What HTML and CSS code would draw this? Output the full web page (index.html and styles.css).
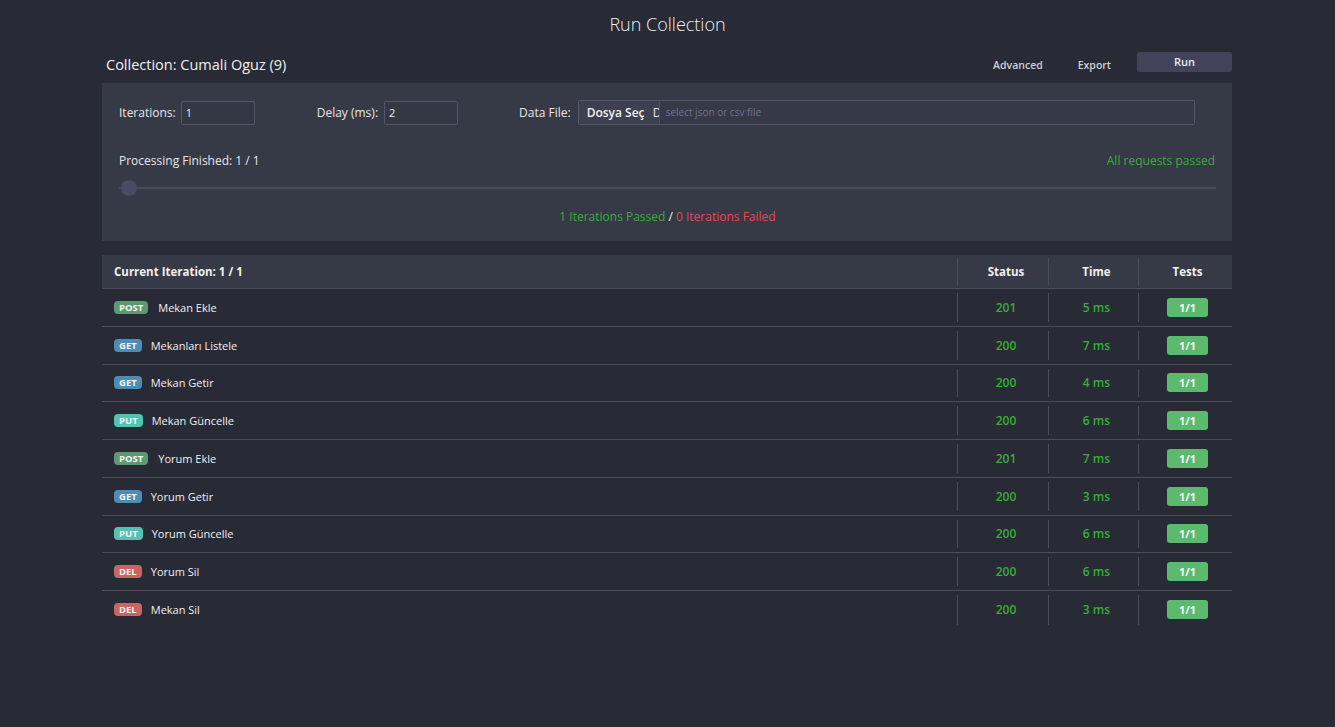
FILE: index.html
```html
<!DOCTYPE html>
<html lang="tr">
<head>
<meta charset="utf-8">
<title>Run Collection</title>
<link rel="stylesheet" href="styles.css">
</head>
<body>
<h1 class="title">Run Collection</h1>
<div class="wrap">
  <div class="topbar">
    <div class="coll-name">Collection: Cumali Oguz (9)</div>
    <div class="actions">
      <span class="link">Advanced</span>
      <span class="link">Export</span>
      <span class="run-btn">Run</span>
    </div>
  </div>

  <div class="panel">
    <div class="fields">
      <label class="field"><span class="lbl">Iterations:</span><span class="input">1</span></label>
      <label class="field"><span class="lbl">Delay (ms):</span><span class="input">2</span></label>
      <label class="field grow"><span class="lbl">Data File:</span>
        <span class="file">
          <span class="file-btn">Dosya Seç</span><span class="file-clip">D</span><span class="file-ph">select json or csv file</span>
        </span>
      </label>
    </div>
    <div class="progress-row">
      <span class="proc">Processing Finished: 1 / 1</span>
      <span class="passed">All requests passed</span>
    </div>
    <div class="slider"><span class="thumb"></span></div>
    <div class="summary"><span class="ok">1 Iterations Passed</span> / <span class="bad">0 Iterations Failed</span></div>
  </div>

  <div class="table">
    <div class="row head">
      <div class="cell name">Current Iteration: 1 / 1</div>
      <div class="cell c">Status</div>
      <div class="cell c">Time</div>
      <div class="cell c t">Tests</div>
    </div>
    <div class="row"><div class="cell name"><span class="badge post">POST</span>Mekan Ekle</div><div class="cell c g">201</div><div class="cell c g">5 ms</div><div class="cell c t"><span class="tests">1/1</span></div></div>
    <div class="row"><div class="cell name"><span class="badge get">GET</span>Mekanları Listele</div><div class="cell c g">200</div><div class="cell c g">7 ms</div><div class="cell c t"><span class="tests">1/1</span></div></div>
    <div class="row"><div class="cell name"><span class="badge get">GET</span>Mekan Getir</div><div class="cell c g">200</div><div class="cell c g">4 ms</div><div class="cell c t"><span class="tests">1/1</span></div></div>
    <div class="row"><div class="cell name"><span class="badge put">PUT</span>Mekan Güncelle</div><div class="cell c g">200</div><div class="cell c g">6 ms</div><div class="cell c t"><span class="tests">1/1</span></div></div>
    <div class="row"><div class="cell name"><span class="badge post">POST</span>Yorum Ekle</div><div class="cell c g">201</div><div class="cell c g">7 ms</div><div class="cell c t"><span class="tests">1/1</span></div></div>
    <div class="row"><div class="cell name"><span class="badge get">GET</span>Yorum Getir</div><div class="cell c g">200</div><div class="cell c g">3 ms</div><div class="cell c t"><span class="tests">1/1</span></div></div>
    <div class="row"><div class="cell name"><span class="badge put">PUT</span>Yorum Güncelle</div><div class="cell c g">200</div><div class="cell c g">6 ms</div><div class="cell c t"><span class="tests">1/1</span></div></div>
    <div class="row"><div class="cell name"><span class="badge del">DEL</span>Yorum Sil</div><div class="cell c g">200</div><div class="cell c g">6 ms</div><div class="cell c t"><span class="tests">1/1</span></div></div>
    <div class="row last"><div class="cell name"><span class="badge del">DEL</span>Mekan Sil</div><div class="cell c g">200</div><div class="cell c g">3 ms</div><div class="cell c t"><span class="tests">1/1</span></div></div>
  </div>
</div>
</body>
</html>
```

FILE: styles.css
```css
* { box-sizing: border-box; }
html, body { margin: 0; padding: 0; }
body {
  background: #282a36;
  color: #e6e6e6;
  font-family: "Open Sans", "Noto Sans", "DejaVu Sans", sans-serif;
  font-size: 12px;
  height: 727px;
  overflow: hidden;
}
.title {
  margin: 0;
  padding-top: 11px;
  height: 44px;
  text-align: center;
  font-weight: 300;
  font-size: 18px;
  line-height: 26px;
  color: #eeeeee;
}
.wrap {
  width: 1130px;
  margin-left: 102px;
}
.topbar {
  height: 39px;
  display: flex;
  align-items: center;
  justify-content: space-between;
  padding-left: 4px;
}
.coll-name {
  font-size: 14.5px;
  color: #f0f0f0;
  margin-top: 1px;
}
.actions {
  display: flex;
  align-items: center;
  height: 100%;
}
.link {
  font-size: 10.5px;
  font-weight: 600;
  color: #cfcfd4;
  margin-right: 35px;
  margin-top: 2px;
}
.link + .link { margin-right: 26px; }
.run-btn {
  width: 95px;
  height: 20px;
  background: #41435a;
  border-radius: 2px;
  font-size: 11px;
  font-weight: 600;
  color: #e8e8ee;
  text-align: center;
  line-height: 20px;
  margin-top: -3px;
}
.panel {
  background: #363946;
  height: 158px;
  padding: 17px 16px 0 17px;
}
.fields {
  display: flex;
  align-items: center;
  gap: 61px;
  padding-right: 21px;
}
.field { display: flex; align-items: center; }
.field.grow { flex: 1; }
.lbl {
  font-size: 12px;
  color: #e6e6e6;
  margin-right: 5px;
}
.input {
  width: 74px;
  height: 24px;
  border: 1px solid #53566a;
  border-radius: 2px;
  background: #343744;
  padding-left: 4px;
  font-size: 11px;
  line-height: 22px;
  color: #f0f0f0;
}
.field:nth-child(2) { margin-left: 1px; }
.field:nth-child(2) .lbl { margin-right: 6px; }
.field.grow .lbl { margin-right: 7px; }
.file {
  flex: 1;
  display: flex;
  height: 25px;
  border: 1px solid #55586a;
  border-radius: 2px;
  overflow: hidden;
}
.file-btn {
  background: #3d4050;
  font-size: 12px;
  font-weight: 600;
  color: #f0f0f0;
  line-height: 23px;
  padding-left: 8px;
  width: 74px;
  white-space: nowrap;
  overflow: hidden;
}
.file-clip {
  width: 6px;
  overflow: hidden;
  background: #3d4050;
  font-size: 12px;
  line-height: 23px;
  color: #e8e8e8;
}
.file-ph {
  flex: 1;
  background: #363946;
  border-left: 1px solid #4b4e60;
  font-size: 10px;
  line-height: 23px;
  padding-left: 6px;
  color: #6e7399;
}
.progress-row {
  display: flex;
  justify-content: space-between;
  margin-top: 27px;
  font-size: 12px;
  line-height: 18px;
  padding-right: 1px;
}
.proc { color: #e6e6e6; }
.passed { color: #38ad38; }
.slider {
  position: relative;
  margin-top: 17px;
  height: 2px;
  background: #474a57;
}
.thumb {
  position: absolute;
  left: 2px;
  top: -7px;
  width: 16px;
  height: 16px;
  border-radius: 50%;
  background: #484b61;
}
.summary {
  text-align: center;
  margin-top: 19px;
  font-size: 12px;
  line-height: 18px;
  color: #f0f0f0;
}
.ok { color: #38ad38; }
.bad { color: #e54a4a; }

.table { margin-top: 14px; }
.row {
  display: grid;
  grid-template-columns: 1fr 91px 90px 94px;
  height: 37.75px;
  padding: 4px 0;
  border-bottom: 1px solid #4a4d5a;
}
.row.last { border-bottom: none; }
.row.head {
  background: #363946;
  height: 34px;
  padding: 3px 0;
}
.cell {
  display: flex;
  align-items: center;
  font-size: 11px;
  color: #f0f0f0;
}
.cell.c {
  justify-content: center;
  border-left: 1px solid #4a4d5a;
  padding-left: 6px;
}
.cell.c.t { padding-left: 4px; }
.head .cell {
  font-weight: 700;
  font-size: 11.5px;
}
.cell.name { padding-left: 12px; }
.cell.g { color: #38ad38; font-weight: 600; font-size: 12px; }
.badge {
  display: inline-block;
  height: 13px;
  line-height: 13px;
  padding: 0 5px;
  border-radius: 4px;
  font-size: 9.5px;
  font-weight: 700;
  color: #f4f4f4;
  margin-right: 9px;
}
.badge.post { background: #5e9a6f; margin-right: 10px; }
.badge.get { background: #4d8db5; }
.badge.put { background: #54c2b2; }
.badge.del { background: #cd6363; }
.tests {
  display: inline-block;
  width: 41px;
  height: 19px;
  line-height: 19px;
  background: #5cba6e;
  border-radius: 3px;
  text-align: center;
  font-weight: 700;
  font-size: 11px;
  color: #f6f6f6;
}
```
